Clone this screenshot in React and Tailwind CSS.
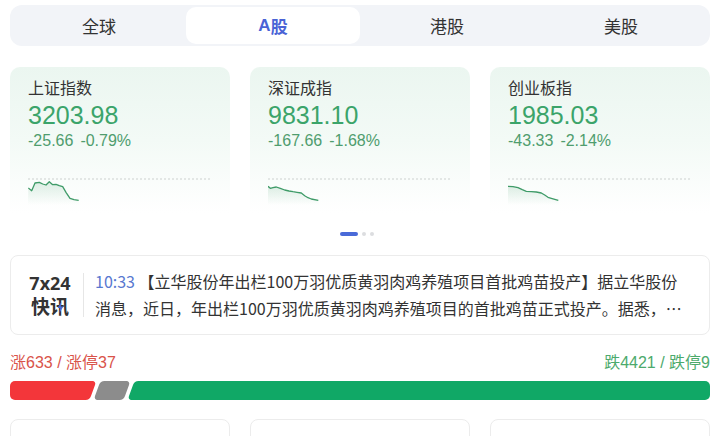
import React from "react";

const CJK = { fontFamily: '"Noto Sans CJK SC", "Noto Sans", sans-serif' };
const NUM = { fontFamily: '"Liberation Sans", "Noto Sans CJK SC", sans-serif' };

const cards = [
  {
    name: "上证指数",
    value: "3203.98",
    chg: "-25.66",
    pct: "-0.79%",
    pts: "0.3,7 3.7,9.7 7,2 11.3,1.3 14.7,3 18,4 21.3,0.7 24.7,3.7 28,3.3 31.3,4.7 34.7,5.7 38,11.3 42,17.3 46,18.7 50.7,19.3",
  },
  {
    name: "深证成指",
    value: "9831.10",
    chg: "-167.66",
    pct: "-1.68%",
    pts: "0,5.3 2.3,7.3 5,6.7 8.3,6 12.3,7.3 16.7,9 21,10 25,10.7 29,11.3 33.3,12 36.7,14.7 40,16.7 43.3,18 50.3,19.3",
  },
  {
    name: "创业板指",
    value: "1985.03",
    chg: "-43.33",
    pct: "-2.14%",
    pts: "0,5.3 5,5.7 10,6.7 14.3,8.7 18.3,10.3 23.3,10.7 28.3,11 33.3,12 36.7,14 40,16.3 43.3,17.3 50.3,19.3",
  },
];

function Spark({ pts, id }) {
  const area = `0,24 ${pts} 51,24`;
  return (
    <svg width="52" height="24" viewBox="0 0 52 24" className="block">
      <defs>
        <linearGradient id={id} x1="0" y1="0" x2="0" y2="1">
          <stop offset="0" stopColor="#3a9a64" stopOpacity="0.16" />
          <stop offset="1" stopColor="#3a9a64" stopOpacity="0" />
        </linearGradient>
      </defs>
      <polygon points={area} fill={`url(#${id})`} />
      <polyline points={pts} fill="none" stroke="#3f9b68" strokeWidth="1.3" strokeLinejoin="round" />
    </svg>
  );
}

export default function App() {
  const tabs = ["全球", "A股", "港股", "美股"];
  return (
    <div className="w-[717px] h-[436px] overflow-hidden bg-white pl-[10px] pr-[7px]" style={CJK}>
      {/* Tabs */}
      <div className="mt-[5px] h-[41px] rounded-[12px] bg-[#f2f4f8] p-[2px] grid grid-cols-4">
        {tabs.map((t, i) =>
          i === 1 ? (
            <div key={t} className="rounded-[10px] bg-white flex items-center justify-center text-[17px] font-bold text-[#4a63d6]">
              <span style={NUM}>A</span>股
            </div>
          ) : (
            <div key={t} className="flex items-center justify-center text-[17px] text-[#333]">
              {t}
            </div>
          )
        )}
      </div>

      {/* Index cards */}
      <div className="mt-[21px] grid grid-cols-3 gap-[20px]">
        {cards.map((c, i) => (
          <div key={c.name} className="h-[146px] rounded-t-[10px] bg-gradient-to-b from-[#ebf6f0] via-[#f3faf6] to-white pl-[18px] pr-[20px] pt-[9px]">
            <div className="text-[16px] leading-[22px] text-[#333]">{c.name}</div>
            <div className="text-[25px] leading-[34px] text-[#3ba46a]" style={NUM}>{c.value}</div>
            <div className="flex gap-[7px] text-[16px] leading-[18px] text-[#4f9d6e]" style={NUM}>
              <span>{c.chg}</span>
              <span>{c.pct}</span>
            </div>
            <div className="mt-[28px] border-t-2 border-dotted border-[#e3e7e5]" />
            <div className="mt-[1px]">
              <Spark pts={c.pts} id={`g${i}`} />
            </div>
          </div>
        ))}
      </div>

      {/* Pager dots */}
      <div className="mt-[19px] flex items-center justify-center gap-[4px] pr-[6px]">
        <div className="h-[4px] w-[18px] rounded-full bg-[#4a6ad8]" />
        <div className="h-[4px] w-[4px] rounded-full bg-[#dcdde0]" />
        <div className="h-[4px] w-[4px] rounded-full bg-[#dcdde0]" />
      </div>

      {/* News */}
      <div className="mt-[19px] h-[80px] rounded-[8px] border border-[#ececec] flex items-center pl-[17px] pr-[18px]">
        <div className="w-[44px] flex flex-col items-center text-[#333] font-bold">
          <div className="text-[18px] leading-[22px]" style={{ fontFamily: '"Noto Sans", "Noto Sans CJK SC", sans-serif' }}>7x24</div>
          <div className="relative text-[19px] leading-[24px]">
            快讯
            <svg className="absolute left-[26px] top-[8px]" width="7" height="11" viewBox="0 0 7 11">
              <path d="M4.2 0 L0.6 6 L3.2 6 L2.4 11 L6.4 4.4 L3.8 4.4 Z" fill="#4a6ad8" />
            </svg>
          </div>
        </div>
        <div className="ml-[11px] w-px h-[44px] bg-[#e6e6e6]" />
        <div className="ml-[11px] flex-1 text-[16px] leading-[27px] text-[#333] line-clamp-2">
          <span className="text-[#5878d0]">10:33</span> 【立华股份年出栏100万羽优质黄羽肉鸡养殖项目首批鸡苗投产】据立华股份消息，近日，年出栏100万羽优质黄羽肉鸡养殖项目的首批鸡苗正式投产。据悉，该项目位于江苏省，总投资约1.5亿元。
        </div>
      </div>

      {/* Up / down stats */}
      <div className="mt-[16px] flex justify-between text-[16px] leading-[24px]" style={NUM}>
        <span className="text-[#d9534a]">涨633 / 涨停37</span>
        <span className="text-[#4caa6c]">跌4421 / 跌停9</span>
      </div>
      <div className="mt-[6px] h-[19px] rounded-[5px] overflow-hidden flex gap-[4px]">
        <div className="w-[87px] -ml-[4px] bg-[#f3363a] -skew-x-[20deg] rounded-r-[4px]" />
        <div className="w-[30px] bg-[#8c8c8c] -skew-x-[20deg] rounded-[4px]" />
        <div className="flex-1 -mr-[6px] bg-[#10a866] -skew-x-[20deg] rounded-l-[4px]" />
      </div>

      {/* Bottom cards */}
      <div className="mt-[19px] grid grid-cols-3 gap-[20px]">
        <div className="h-[60px] rounded-[8px] border border-[#ececec]" />
        <div className="h-[60px] rounded-[8px] border border-[#ececec]" />
        <div className="h-[60px] rounded-[8px] border border-[#ececec]" />
      </div>
    </div>
  );
}
